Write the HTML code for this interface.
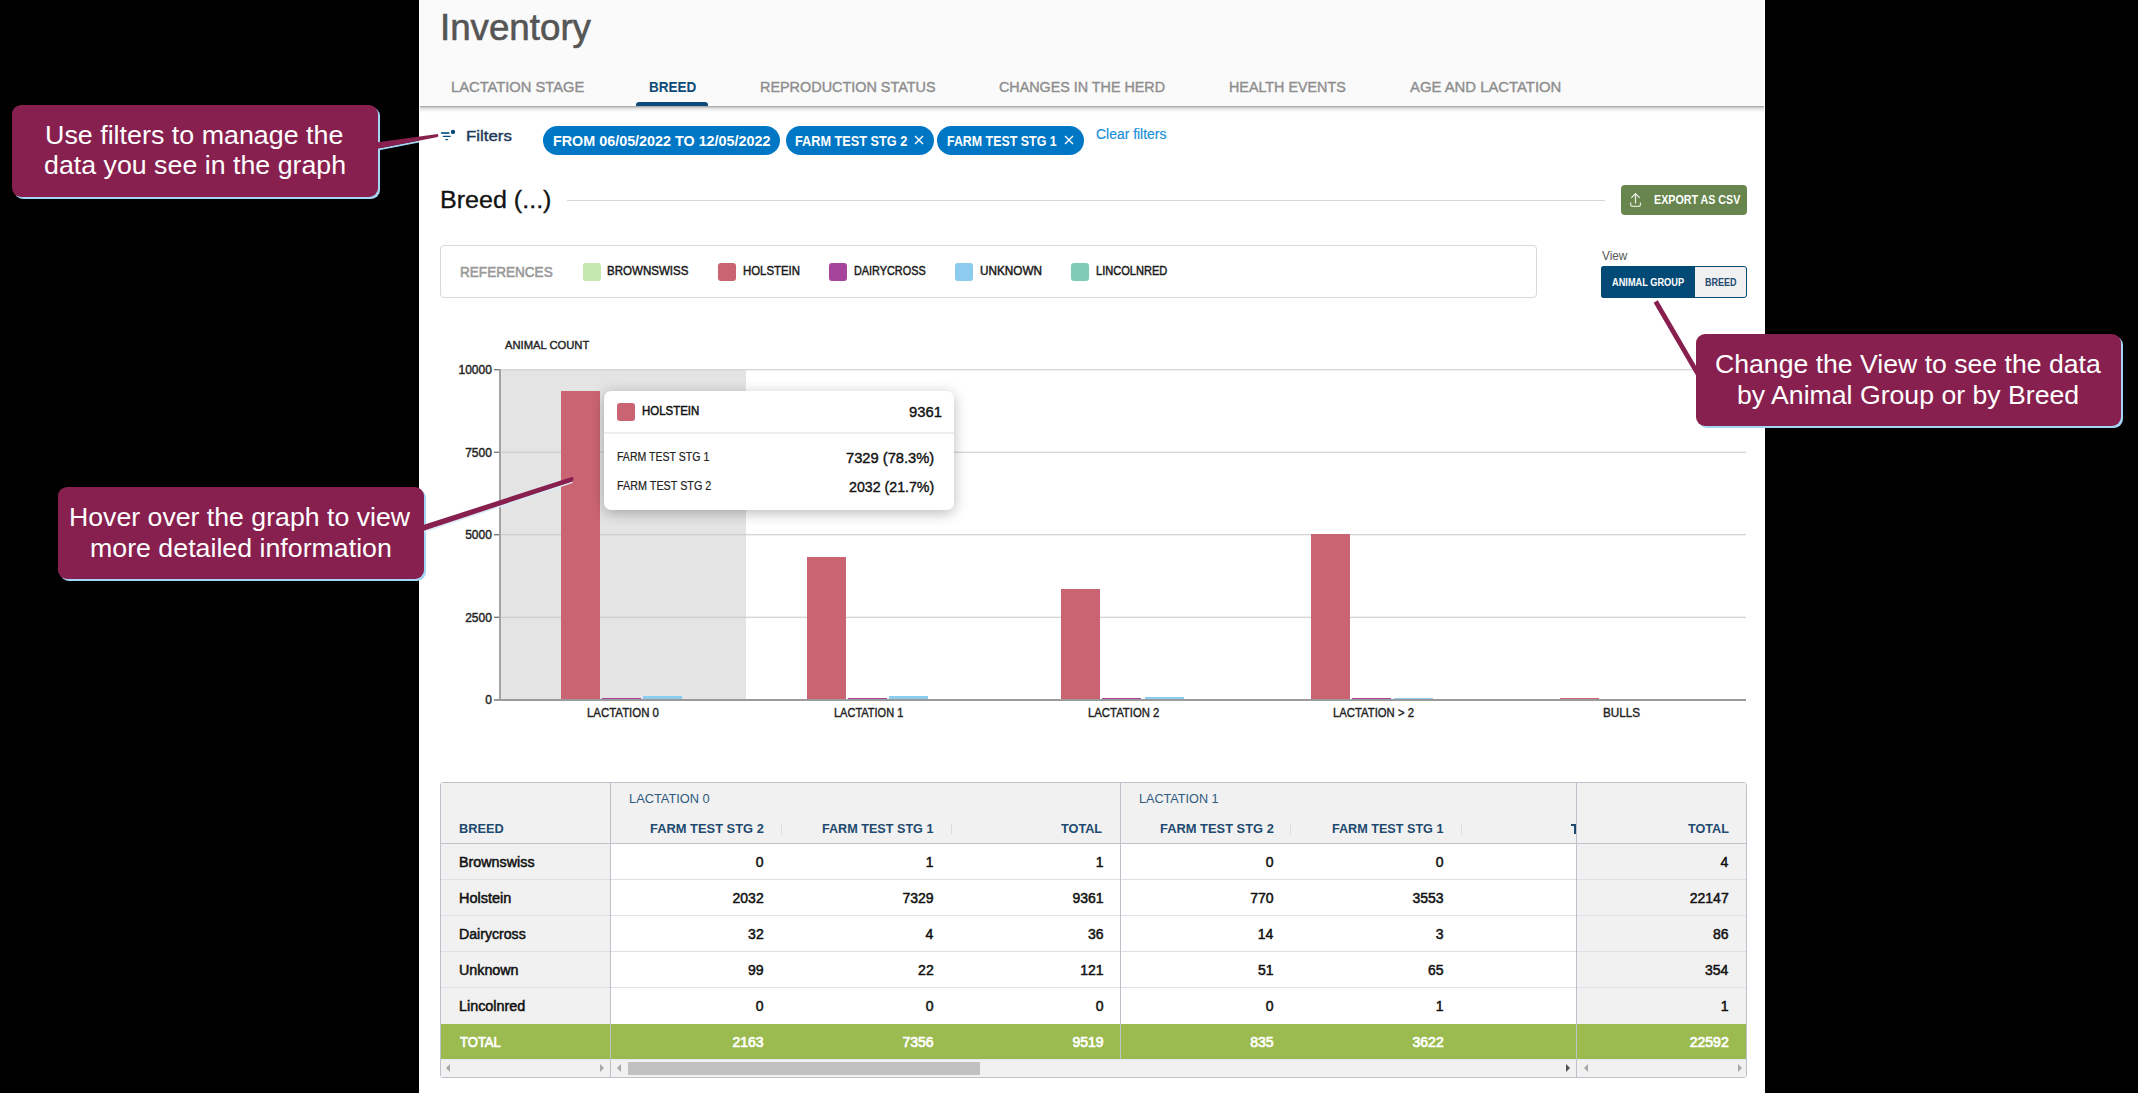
<!DOCTYPE html>
<html><head><meta charset="utf-8"><style>
html,body{margin:0;padding:0;background:#000;width:2138px;height:1093px;overflow:hidden;}
#root{position:relative;width:2138px;height:1093px;overflow:hidden;background:#000;font-family:"Liberation Sans",sans-serif;}
</style></head><body><div id="root">
<div style="position:absolute;left:419px;top:0px;width:1346px;height:1093px;z-index:0;background:#fff;"></div>
<div style="position:absolute;left:420px;top:0px;width:1344px;height:105px;z-index:1;background:#fafafa;"></div>
<div style="position:absolute;left:420px;top:106px;width:1344px;height:1px;z-index:1;background:#ababab;"></div>
<div style="position:absolute;left:420px;top:107px;width:1344px;height:1px;z-index:1;background:#cdcdcd;"></div>
<div style="position:absolute;left:420px;top:108px;width:1344px;height:1px;z-index:1;background:#e0e0e0;"></div>
<div style="position:absolute;left:420px;top:109px;width:1344px;height:1px;z-index:1;background:#ececec;"></div>
<div style="position:absolute;left:420px;top:110px;width:1344px;height:1px;z-index:1;background:#f4f4f4;"></div>
<div style="position:absolute;left:420px;top:111px;width:1344px;height:1px;z-index:1;background:#f9f9f9;"></div>
<div style="position:absolute;left:420px;top:112px;width:1344px;height:1px;z-index:1;background:#fcfcfc;"></div>
<div style="position:absolute;left:636px;top:102px;width:72px;height:4px;z-index:2;background:#0d4a78;border-radius:3px 3px 0 0;"></div>
<svg style="position:absolute;left:436px;top:122px;z-index:3" width="30" height="24" viewBox="0 0 30 24"><rect x="4.8" y="10.1" width="8.8" height="1.8" rx="0.8" fill="#2e6a94"/><rect x="6.8" y="13.8" width="7.9" height="1.3" rx="0.6" fill="#004a7c"/><rect x="9.2" y="16.9" width="2.8" height="1.3" rx="0.6" fill="#004a7c"/><circle cx="17" cy="9.9" r="2.2" fill="#004a7c"/></svg>
<div style="position:absolute;left:543px;top:126px;width:237px;height:29px;z-index:2;background:#0077c5;border-radius:15px;"></div>
<div style="position:absolute;left:786px;top:126px;width:148px;height:29px;z-index:2;background:#0077c5;border-radius:15px;"></div>
<div style="position:absolute;left:937px;top:126px;width:147px;height:29px;z-index:2;background:#0077c5;border-radius:15px;"></div>
<svg style="position:absolute;left:913px;top:133.9px;z-index:3" width="12" height="12" viewBox="0 0 12 12"><path d="M2 2 L10 10 M10 2 L2 10" stroke="#fff" stroke-width="1.4"/></svg>
<svg style="position:absolute;left:1063.4px;top:133.9px;z-index:3" width="12" height="12" viewBox="0 0 12 12"><path d="M2 2 L10 10 M10 2 L2 10" stroke="#fff" stroke-width="1.4"/></svg>
<div style="position:absolute;left:567px;top:200px;width:1038px;height:1px;z-index:2;background:#d6d6d6;"></div>
<div style="position:absolute;left:1621px;top:185px;width:126px;height:30px;z-index:2;background:#68854d;border-radius:4px;"></div>
<svg style="position:absolute;left:1620px;top:184px;z-index:3" width="40" height="32" viewBox="0 0 40 32"><path d="M15.5 9.8 V19.6 M11.3 13.8 L15.5 9.5 L19.7 13.8" stroke="#eef2ea" stroke-width="1.2" fill="none"/><path d="M10.6 18.6 V20.6 Q10.6 22.3 12.3 22.3 H18.8 Q20.5 22.3 20.5 20.6 V18.6" stroke="#dfe6d8" stroke-width="1.3" fill="none"/></svg>
<div style="position:absolute;left:440px;top:245px;width:1095px;height:51px;z-index:2;border:1px solid #d9d9d9;border-radius:4px;background:#fff;"></div>
<div style="position:absolute;left:583px;top:263px;width:18px;height:18px;z-index:3;background:#c5e8b0;border-radius:3px;"></div>
<div style="position:absolute;left:718px;top:263px;width:18px;height:18px;z-index:3;background:#cb6472;border-radius:3px;"></div>
<div style="position:absolute;left:829px;top:263px;width:18px;height:18px;z-index:3;background:#a5449a;border-radius:3px;"></div>
<div style="position:absolute;left:955px;top:263px;width:18px;height:18px;z-index:3;background:#8ccdef;border-radius:3px;"></div>
<div style="position:absolute;left:1071px;top:263px;width:18px;height:18px;z-index:3;background:#80cbb8;border-radius:3px;"></div>
<div style="position:absolute;left:1601px;top:266px;width:146px;height:32px;z-index:2;background:#f0f0f0;border:1px solid #024a76;border-radius:3px;box-sizing:border-box;"></div>
<div style="position:absolute;left:1601px;top:266px;width:94px;height:32px;z-index:3;background:#024a76;border-radius:3px 0 0 3px;"></div>
<div style="position:absolute;left:501px;top:370px;width:245px;height:330px;z-index:1;background:#e4e4e4;"></div>
<svg style="position:absolute;left:0;top:0;z-index:2" width="2138" height="1093"><line x1="501" y1="369.75" x2="1746" y2="369.75" stroke="#c8c8c8" stroke-width="1.2"/><line x1="494" y1="369.75" x2="500" y2="369.75" stroke="#666" stroke-width="1.2"/><line x1="501" y1="452.25" x2="1746" y2="452.25" stroke="#c8c8c8" stroke-width="1.2"/><line x1="494" y1="452.25" x2="500" y2="452.25" stroke="#666" stroke-width="1.2"/><line x1="501" y1="534.75" x2="1746" y2="534.75" stroke="#c8c8c8" stroke-width="1.2"/><line x1="494" y1="534.75" x2="500" y2="534.75" stroke="#666" stroke-width="1.2"/><line x1="501" y1="617.25" x2="1746" y2="617.25" stroke="#c8c8c8" stroke-width="1.2"/><line x1="494" y1="617.25" x2="500" y2="617.25" stroke="#666" stroke-width="1.2"/></svg>
<div style="position:absolute;left:499px;top:369px;width:2px;height:331px;z-index:3;background:#a3a3a3;"></div>
<div style="position:absolute;left:494px;top:699px;width:1252px;height:2px;z-index:3;background:#9a9a9a;"></div>
<div style="position:absolute;left:561px;top:391px;width:39px;height:308px;z-index:2;background:#cb6472;"></div>
<div style="position:absolute;left:807px;top:557px;width:39px;height:142px;z-index:2;background:#cb6472;"></div>
<div style="position:absolute;left:1061px;top:589px;width:39px;height:110px;z-index:2;background:#cb6472;"></div>
<div style="position:absolute;left:1311px;top:534px;width:39px;height:165px;z-index:2;background:#cb6472;"></div>
<div style="position:absolute;left:1560px;top:698px;width:39px;height:1px;z-index:2;background:#cb6472;"></div>
<div style="position:absolute;left:602px;top:698px;width:39px;height:1px;z-index:2;background:#a5449a;"></div>
<div style="position:absolute;left:848px;top:698px;width:39px;height:1px;z-index:2;background:#a5449a;"></div>
<div style="position:absolute;left:1102px;top:698px;width:39px;height:1px;z-index:2;background:#a5449a;"></div>
<div style="position:absolute;left:1352px;top:698px;width:39px;height:1px;z-index:2;background:#a5449a;"></div>
<div style="position:absolute;left:643px;top:696px;width:39px;height:3px;z-index:2;background:#8ccdef;"></div>
<div style="position:absolute;left:889px;top:696px;width:39px;height:3px;z-index:2;background:#8ccdef;"></div>
<div style="position:absolute;left:1145px;top:697px;width:39px;height:2px;z-index:2;background:#8ccdef;"></div>
<div style="position:absolute;left:1394px;top:698px;width:39px;height:1px;z-index:2;background:#8ccdef;"></div>
<div style="position:absolute;left:604px;top:391px;width:350px;height:119px;z-index:6;background:#fff;border-radius:7px;box-shadow:0 3px 14px rgba(0,0,0,0.28);"></div>
<div style="position:absolute;left:617px;top:403px;width:18px;height:18px;z-index:7;background:#cb6472;border-radius:3px;"></div>
<div style="position:absolute;left:604px;top:432px;width:350px;height:2px;z-index:7;background:#eeeeee;"></div>
<div style="position:absolute;left:440px;top:782px;width:1307px;height:296px;z-index:1;border:1px solid #bcc1ca;border-radius:3px;background:#fff;box-sizing:border-box;"></div>
<div style="position:absolute;left:441px;top:783px;width:1305px;height:61px;z-index:2;background:#f1f1f1;"></div>
<div style="position:absolute;left:441px;top:844px;width:170px;height:215px;z-index:2;background:#f1f1f1;"></div>
<div style="position:absolute;left:1577px;top:844px;width:169px;height:215px;z-index:2;background:#f1f1f1;"></div>
<div style="position:absolute;left:441px;top:1059px;width:1305px;height:18px;z-index:2;background:#f1f1f1;"></div>
<div style="position:absolute;left:441px;top:1059px;width:1305px;height:1px;z-index:3;background:#e4e6f2;"></div>
<div style="position:absolute;left:441px;top:1024px;width:1305px;height:35px;z-index:3;background:#9bba50;"></div>
<div style="position:absolute;left:441px;top:843px;width:1305px;height:1px;z-index:4;background:#bcc1ca;"></div>
<div style="position:absolute;left:441px;top:879px;width:1305px;height:1px;z-index:4;background:#dde1e7;"></div>
<div style="position:absolute;left:441px;top:915px;width:1305px;height:1px;z-index:4;background:#dde1e7;"></div>
<div style="position:absolute;left:441px;top:951px;width:1305px;height:1px;z-index:4;background:#dde1e7;"></div>
<div style="position:absolute;left:441px;top:987px;width:1305px;height:1px;z-index:4;background:#dde1e7;"></div>
<div style="position:absolute;left:610px;top:783px;width:1px;height:294px;z-index:5;background:#bcc1ca;"></div>
<div style="position:absolute;left:1576px;top:783px;width:1px;height:294px;z-index:5;background:#bcc1ca;"></div>
<div style="position:absolute;left:1120px;top:783px;width:1px;height:276px;z-index:5;background:#bcc1ca;"></div>
<div style="position:absolute;left:780.5px;top:824px;width:1px;height:10px;z-index:4;background:#dcdcdc;"></div>
<div style="position:absolute;left:950.6px;top:824px;width:1px;height:10px;z-index:4;background:#dcdcdc;"></div>
<div style="position:absolute;left:1290px;top:824px;width:1px;height:10px;z-index:4;background:#dcdcdc;"></div>
<div style="position:absolute;left:1460.6px;top:824px;width:1px;height:10px;z-index:4;background:#dcdcdc;"></div>
<div style="position:absolute;left:1571px;top:824px;width:5px;height:2px;z-index:4;background:#1e4a70;"></div>
<div style="position:absolute;left:1573.7px;top:824px;width:2.3px;height:10px;z-index:4;background:#1e4a70;"></div>
<div style="position:absolute;left:628px;top:1062px;width:352px;height:13px;z-index:6;background:#c1c1c1;"></div>
<div style="position:absolute;left:439.73px;top:9.53px;font-family:'Liberation Sans',sans-serif;font-size:36px;line-height:36px;font-weight:400;color:#555555;white-space:nowrap;z-index:5;transform:scaleX(1.0195);transform-origin:0 0;-webkit-text-stroke:0.6px #555555;">Inventory</div>
<div style="position:absolute;left:451.22px;top:78.60px;font-family:'Liberation Sans',sans-serif;font-size:15px;line-height:15px;font-weight:400;color:#8e8e8e;white-space:nowrap;z-index:5;transform:scaleX(0.9818);transform-origin:0 0;-webkit-text-stroke:0.4px #8e8e8e;">LACTATION STAGE</div>
<div style="position:absolute;left:648.70px;top:78.80px;font-family:'Liberation Sans',sans-serif;font-size:15px;line-height:15px;font-weight:700;color:#0d4a78;white-space:nowrap;z-index:5;transform:scaleX(0.9024);transform-origin:0 0;">BREED</div>
<div style="position:absolute;left:760.05px;top:78.60px;font-family:'Liberation Sans',sans-serif;font-size:15px;line-height:15px;font-weight:400;color:#8e8e8e;white-space:nowrap;z-index:5;transform:scaleX(0.9603);transform-origin:0 0;-webkit-text-stroke:0.4px #8e8e8e;">REPRODUCTION STATUS</div>
<div style="position:absolute;left:999.33px;top:78.60px;font-family:'Liberation Sans',sans-serif;font-size:15px;line-height:15px;font-weight:400;color:#8e8e8e;white-space:nowrap;z-index:5;transform:scaleX(0.9546);transform-origin:0 0;-webkit-text-stroke:0.4px #8e8e8e;">CHANGES IN THE HERD</div>
<div style="position:absolute;left:1229.25px;top:78.60px;font-family:'Liberation Sans',sans-serif;font-size:15px;line-height:15px;font-weight:400;color:#8e8e8e;white-space:nowrap;z-index:5;transform:scaleX(0.9548);transform-origin:0 0;-webkit-text-stroke:0.4px #8e8e8e;">HEALTH EVENTS</div>
<div style="position:absolute;left:1410.30px;top:78.60px;font-family:'Liberation Sans',sans-serif;font-size:15px;line-height:15px;font-weight:400;color:#8e8e8e;white-space:nowrap;z-index:5;transform:scaleX(0.9902);transform-origin:0 0;-webkit-text-stroke:0.4px #8e8e8e;">AGE AND LACTATION</div>
<div style="position:absolute;left:465.69px;top:127.88px;font-family:'Liberation Sans',sans-serif;font-size:15.5px;line-height:15.5px;font-weight:400;color:#1f3a5a;white-space:nowrap;z-index:5;transform:scaleX(1.0879);transform-origin:0 0;-webkit-text-stroke:0.4px #1f3a5a;">Filters</div>
<div style="position:absolute;left:553.08px;top:134.15px;font-family:'Liberation Sans',sans-serif;font-size:14px;line-height:14px;font-weight:700;color:#fff;white-space:nowrap;z-index:5;transform:scaleX(1.0246);transform-origin:0 0;">FROM 06/05/2022 TO 12/05/2022</div>
<div style="position:absolute;left:795.18px;top:134.15px;font-family:'Liberation Sans',sans-serif;font-size:14px;line-height:14px;font-weight:700;color:#fff;white-space:nowrap;z-index:5;transform:scaleX(0.9077);transform-origin:0 0;">FARM TEST STG 2</div>
<div style="position:absolute;left:947.20px;top:134.15px;font-family:'Liberation Sans',sans-serif;font-size:14px;line-height:14px;font-weight:700;color:#fff;white-space:nowrap;z-index:5;transform:scaleX(0.8865);transform-origin:0 0;">FARM TEST STG 1</div>
<div style="position:absolute;left:1095.50px;top:127.15px;font-family:'Liberation Sans',sans-serif;font-size:14px;line-height:14px;font-weight:400;color:#1a90d8;white-space:nowrap;z-index:5;transform:scaleX(0.9944);transform-origin:0 0;-webkit-text-stroke:0.2px #1a90d8;">Clear filters</div>
<div style="position:absolute;left:439.74px;top:189.23px;font-family:'Liberation Sans',sans-serif;font-size:23px;line-height:23px;font-weight:400;color:#111;white-space:nowrap;z-index:5;transform:scaleX(1.0899);transform-origin:0 0;-webkit-text-stroke:0.3px #111;">Breed (...)</div>
<div style="position:absolute;left:1653.52px;top:194.02px;font-family:'Liberation Sans',sans-serif;font-size:12.5px;line-height:12.5px;font-weight:700;color:#fff;white-space:nowrap;z-index:5;transform:scaleX(0.8551);transform-origin:0 0;">EXPORT AS CSV</div>
<div style="position:absolute;left:460.45px;top:264.38px;font-family:'Liberation Sans',sans-serif;font-size:15.5px;line-height:15.5px;font-weight:400;color:#9a9a9a;white-space:nowrap;z-index:5;transform:scaleX(0.8752);transform-origin:0 0;-webkit-text-stroke:0.6px #9a9a9a;">REFERENCES</div>
<div style="position:absolute;left:607.06px;top:263.87px;font-family:'Liberation Sans',sans-serif;font-size:13.5px;line-height:13.5px;font-weight:400;color:#1a1a1a;white-space:nowrap;z-index:5;transform:scaleX(0.8552);transform-origin:0 0;-webkit-text-stroke:0.5px #1a1a1a;">BROWNSWISS</div>
<div style="position:absolute;left:742.87px;top:263.87px;font-family:'Liberation Sans',sans-serif;font-size:13.5px;line-height:13.5px;font-weight:400;color:#1a1a1a;white-space:nowrap;z-index:5;transform:scaleX(0.8445);transform-origin:0 0;-webkit-text-stroke:0.5px #1a1a1a;">HOLSTEIN</div>
<div style="position:absolute;left:853.81px;top:263.87px;font-family:'Liberation Sans',sans-serif;font-size:13.5px;line-height:13.5px;font-weight:400;color:#1a1a1a;white-space:nowrap;z-index:5;transform:scaleX(0.8051);transform-origin:0 0;-webkit-text-stroke:0.5px #1a1a1a;">DAIRYCROSS</div>
<div style="position:absolute;left:980.13px;top:263.87px;font-family:'Liberation Sans',sans-serif;font-size:13.5px;line-height:13.5px;font-weight:400;color:#1a1a1a;white-space:nowrap;z-index:5;transform:scaleX(0.8715);transform-origin:0 0;-webkit-text-stroke:0.5px #1a1a1a;">UNKNOWN</div>
<div style="position:absolute;left:1096.30px;top:263.87px;font-family:'Liberation Sans',sans-serif;font-size:13.5px;line-height:13.5px;font-weight:400;color:#1a1a1a;white-space:nowrap;z-index:5;transform:scaleX(0.8200);transform-origin:0 0;-webkit-text-stroke:0.5px #1a1a1a;">LINCOLNRED</div>
<div style="position:absolute;left:1601.70px;top:249.84px;font-family:'Liberation Sans',sans-serif;font-size:12px;line-height:12px;font-weight:400;color:#555;white-space:nowrap;z-index:5;transform:scaleX(0.9796);transform-origin:0 0;">View</div>
<div style="position:absolute;left:1612.44px;top:276.87px;font-family:'Liberation Sans',sans-serif;font-size:11.5px;line-height:11.5px;font-weight:700;color:#fff;white-space:nowrap;z-index:5;transform:scaleX(0.8022);transform-origin:0 0;">ANIMAL GROUP</div>
<div style="position:absolute;left:1704.75px;top:276.87px;font-family:'Liberation Sans',sans-serif;font-size:11.5px;line-height:11.5px;font-weight:700;color:#1e4a70;white-space:nowrap;z-index:5;transform:scaleX(0.7841);transform-origin:0 0;">BREED</div>
<div style="position:absolute;left:505.30px;top:339.61px;font-family:'Liberation Sans',sans-serif;font-size:11.8px;line-height:11.8px;font-weight:400;color:#222;white-space:nowrap;z-index:5;transform:scaleX(0.9499);transform-origin:0 0;-webkit-text-stroke:0.4px #222;">ANIMAL COUNT</div>
<div style="position:absolute;left:458.50px;top:364.19px;font-family:'Liberation Sans',sans-serif;font-size:12px;line-height:12px;font-weight:400;color:#222;white-space:nowrap;z-index:5;-webkit-text-stroke:0.4px #222;">10000</div>
<div style="position:absolute;left:465.18px;top:446.69px;font-family:'Liberation Sans',sans-serif;font-size:12px;line-height:12px;font-weight:400;color:#222;white-space:nowrap;z-index:5;-webkit-text-stroke:0.4px #222;">7500</div>
<div style="position:absolute;left:465.18px;top:529.19px;font-family:'Liberation Sans',sans-serif;font-size:12px;line-height:12px;font-weight:400;color:#222;white-space:nowrap;z-index:5;-webkit-text-stroke:0.4px #222;">5000</div>
<div style="position:absolute;left:465.18px;top:611.69px;font-family:'Liberation Sans',sans-serif;font-size:12px;line-height:12px;font-weight:400;color:#222;white-space:nowrap;z-index:5;-webkit-text-stroke:0.4px #222;">2500</div>
<div style="position:absolute;left:485.20px;top:694.19px;font-family:'Liberation Sans',sans-serif;font-size:12px;line-height:12px;font-weight:400;color:#222;white-space:nowrap;z-index:5;-webkit-text-stroke:0.4px #222;">0</div>
<div style="position:absolute;left:587.12px;top:706.20px;font-family:'Liberation Sans',sans-serif;font-size:13px;line-height:13px;font-weight:400;color:#222;white-space:nowrap;z-index:5;transform:scaleX(0.8790);transform-origin:0 0;-webkit-text-stroke:0.4px #222;">LACTATION 0</div>
<div style="position:absolute;left:834.45px;top:706.20px;font-family:'Liberation Sans',sans-serif;font-size:13px;line-height:13px;font-weight:400;color:#222;white-space:nowrap;z-index:5;transform:scaleX(0.8463);transform-origin:0 0;-webkit-text-stroke:0.4px #222;">LACTATION 1</div>
<div style="position:absolute;left:1088.03px;top:706.20px;font-family:'Liberation Sans',sans-serif;font-size:13px;line-height:13px;font-weight:400;color:#222;white-space:nowrap;z-index:5;transform:scaleX(0.8724);transform-origin:0 0;-webkit-text-stroke:0.4px #222;">LACTATION 2</div>
<div style="position:absolute;left:1332.63px;top:706.20px;font-family:'Liberation Sans',sans-serif;font-size:13px;line-height:13px;font-weight:400;color:#222;white-space:nowrap;z-index:5;transform:scaleX(0.8694);transform-origin:0 0;-webkit-text-stroke:0.4px #222;">LACTATION &gt; 2</div>
<div style="position:absolute;left:1603.40px;top:706.20px;font-family:'Liberation Sans',sans-serif;font-size:13px;line-height:13px;font-weight:400;color:#222;white-space:nowrap;z-index:5;transform:scaleX(0.9011);transform-origin:0 0;-webkit-text-stroke:0.4px #222;">BULLS</div>
<div style="position:absolute;left:641.62px;top:404.00px;font-family:'Liberation Sans',sans-serif;font-size:13px;line-height:13px;font-weight:400;color:#111;white-space:nowrap;z-index:8;transform:scaleX(0.8806);transform-origin:0 0;-webkit-text-stroke:0.5px #111;">HOLSTEIN</div>
<div style="position:absolute;left:908.73px;top:403.68px;font-family:'Liberation Sans',sans-serif;font-size:15.5px;line-height:15.5px;font-weight:400;color:#111;white-space:nowrap;z-index:8;transform:scaleX(0.9558);transform-origin:0 0;-webkit-text-stroke:0.4px #111;">9361</div>
<div style="position:absolute;left:616.76px;top:450.82px;font-family:'Liberation Sans',sans-serif;font-size:12.5px;line-height:12.5px;font-weight:400;color:#222;white-space:nowrap;z-index:8;transform:scaleX(0.8449);transform-origin:0 0;-webkit-text-stroke:0.2px #222;">FARM TEST STG 1</div>
<div style="position:absolute;left:846.31px;top:450.00px;font-family:'Liberation Sans',sans-serif;font-size:15px;line-height:15px;font-weight:400;color:#111;white-space:nowrap;z-index:8;transform:scaleX(0.9801);transform-origin:0 0;-webkit-text-stroke:0.4px #111;">7329 (78.3%)</div>
<div style="position:absolute;left:616.74px;top:479.82px;font-family:'Liberation Sans',sans-serif;font-size:12.5px;line-height:12.5px;font-weight:400;color:#222;white-space:nowrap;z-index:8;transform:scaleX(0.8634);transform-origin:0 0;-webkit-text-stroke:0.2px #222;">FARM TEST STG 2</div>
<div style="position:absolute;left:849.34px;top:479.00px;font-family:'Liberation Sans',sans-serif;font-size:15px;line-height:15px;font-weight:400;color:#111;white-space:nowrap;z-index:8;transform:scaleX(0.9462);transform-origin:0 0;-webkit-text-stroke:0.4px #111;">2032 (21.7%)</div>
<div style="position:absolute;left:628.71px;top:792.00px;font-family:'Liberation Sans',sans-serif;font-size:13px;line-height:13px;font-weight:400;color:#2f5a80;white-space:nowrap;z-index:5;transform:scaleX(0.9859);transform-origin:0 0;">LACTATION 0</div>
<div style="position:absolute;left:1138.73px;top:792.00px;font-family:'Liberation Sans',sans-serif;font-size:13px;line-height:13px;font-weight:400;color:#2f5a80;white-space:nowrap;z-index:5;transform:scaleX(0.9721);transform-origin:0 0;">LACTATION 1</div>
<div style="position:absolute;left:458.85px;top:822.17px;font-family:'Liberation Sans',sans-serif;font-size:13.5px;line-height:13.5px;font-weight:700;color:#1e4a70;white-space:nowrap;z-index:5;transform:scaleX(0.9453);transform-origin:0 0;">BREED</div>
<div style="position:absolute;left:649.64px;top:822.17px;font-family:'Liberation Sans',sans-serif;font-size:13.5px;line-height:13.5px;font-weight:700;color:#1e4a70;white-space:nowrap;z-index:5;transform:scaleX(0.9546);transform-origin:0 0;">FARM TEST STG 2</div>
<div style="position:absolute;left:822.16px;top:822.17px;font-family:'Liberation Sans',sans-serif;font-size:13.5px;line-height:13.5px;font-weight:700;color:#1e4a70;white-space:nowrap;z-index:5;transform:scaleX(0.9343);transform-origin:0 0;">FARM TEST STG 1</div>
<div style="position:absolute;left:1061.21px;top:822.17px;font-family:'Liberation Sans',sans-serif;font-size:13.5px;line-height:13.5px;font-weight:700;color:#1e4a70;white-space:nowrap;z-index:5;transform:scaleX(0.9400);transform-origin:0 0;">TOTAL</div>
<div style="position:absolute;left:1159.64px;top:822.17px;font-family:'Liberation Sans',sans-serif;font-size:13.5px;line-height:13.5px;font-weight:700;color:#1e4a70;white-space:nowrap;z-index:5;transform:scaleX(0.9546);transform-origin:0 0;">FARM TEST STG 2</div>
<div style="position:absolute;left:1332.16px;top:822.17px;font-family:'Liberation Sans',sans-serif;font-size:13.5px;line-height:13.5px;font-weight:700;color:#1e4a70;white-space:nowrap;z-index:5;transform:scaleX(0.9343);transform-origin:0 0;">FARM TEST STG 1</div>
<div style="position:absolute;left:1687.91px;top:822.17px;font-family:'Liberation Sans',sans-serif;font-size:13.5px;line-height:13.5px;font-weight:700;color:#1e4a70;white-space:nowrap;z-index:5;transform:scaleX(0.9354);transform-origin:0 0;">TOTAL</div>
<div style="position:absolute;left:458.66px;top:855.72px;font-family:'Liberation Sans',sans-serif;font-size:13.8px;line-height:13.8px;font-weight:400;color:#111;white-space:nowrap;z-index:5;transform:scaleX(1.0372);transform-origin:0 0;-webkit-text-stroke:0.5px #111;">Brownswiss</div>
<div style="position:absolute;left:755.70px;top:854.95px;font-family:'Liberation Sans',sans-serif;font-size:14px;line-height:14px;font-weight:400;color:#111;white-space:nowrap;z-index:5;-webkit-text-stroke:0.5px #111;">0</div>
<div style="position:absolute;left:925.80px;top:854.95px;font-family:'Liberation Sans',sans-serif;font-size:14px;line-height:14px;font-weight:400;color:#111;white-space:nowrap;z-index:5;-webkit-text-stroke:0.5px #111;">1</div>
<div style="position:absolute;left:1095.80px;top:854.95px;font-family:'Liberation Sans',sans-serif;font-size:14px;line-height:14px;font-weight:400;color:#111;white-space:nowrap;z-index:5;-webkit-text-stroke:0.5px #111;">1</div>
<div style="position:absolute;left:1265.70px;top:854.95px;font-family:'Liberation Sans',sans-serif;font-size:14px;line-height:14px;font-weight:400;color:#111;white-space:nowrap;z-index:5;-webkit-text-stroke:0.5px #111;">0</div>
<div style="position:absolute;left:1435.70px;top:854.95px;font-family:'Liberation Sans',sans-serif;font-size:14px;line-height:14px;font-weight:400;color:#111;white-space:nowrap;z-index:5;-webkit-text-stroke:0.5px #111;">0</div>
<div style="position:absolute;left:1720.60px;top:854.95px;font-family:'Liberation Sans',sans-serif;font-size:14px;line-height:14px;font-weight:400;color:#111;white-space:nowrap;z-index:5;-webkit-text-stroke:0.5px #111;">4</div>
<div style="position:absolute;left:458.65px;top:891.72px;font-family:'Liberation Sans',sans-serif;font-size:13.8px;line-height:13.8px;font-weight:400;color:#111;white-space:nowrap;z-index:5;transform:scaleX(1.0484);transform-origin:0 0;-webkit-text-stroke:0.5px #111;">Holstein</div>
<div style="position:absolute;left:732.54px;top:890.95px;font-family:'Liberation Sans',sans-serif;font-size:14px;line-height:14px;font-weight:400;color:#111;white-space:nowrap;z-index:5;-webkit-text-stroke:0.5px #111;">2032</div>
<div style="position:absolute;left:902.44px;top:890.95px;font-family:'Liberation Sans',sans-serif;font-size:14px;line-height:14px;font-weight:400;color:#111;white-space:nowrap;z-index:5;-webkit-text-stroke:0.5px #111;">7329</div>
<div style="position:absolute;left:1072.44px;top:890.95px;font-family:'Liberation Sans',sans-serif;font-size:14px;line-height:14px;font-weight:400;color:#111;white-space:nowrap;z-index:5;-webkit-text-stroke:0.5px #111;">9361</div>
<div style="position:absolute;left:1250.13px;top:890.95px;font-family:'Liberation Sans',sans-serif;font-size:14px;line-height:14px;font-weight:400;color:#111;white-space:nowrap;z-index:5;-webkit-text-stroke:0.5px #111;">770</div>
<div style="position:absolute;left:1412.44px;top:890.95px;font-family:'Liberation Sans',sans-serif;font-size:14px;line-height:14px;font-weight:400;color:#111;white-space:nowrap;z-index:5;-webkit-text-stroke:0.5px #111;">3553</div>
<div style="position:absolute;left:1689.76px;top:890.95px;font-family:'Liberation Sans',sans-serif;font-size:14px;line-height:14px;font-weight:400;color:#111;white-space:nowrap;z-index:5;-webkit-text-stroke:0.5px #111;">22147</div>
<div style="position:absolute;left:458.67px;top:927.72px;font-family:'Liberation Sans',sans-serif;font-size:13.8px;line-height:13.8px;font-weight:400;color:#111;white-space:nowrap;z-index:5;transform:scaleX(1.0240);transform-origin:0 0;-webkit-text-stroke:0.5px #111;">Dairycross</div>
<div style="position:absolute;left:748.11px;top:926.95px;font-family:'Liberation Sans',sans-serif;font-size:14px;line-height:14px;font-weight:400;color:#111;white-space:nowrap;z-index:5;-webkit-text-stroke:0.5px #111;">32</div>
<div style="position:absolute;left:925.60px;top:926.95px;font-family:'Liberation Sans',sans-serif;font-size:14px;line-height:14px;font-weight:400;color:#111;white-space:nowrap;z-index:5;-webkit-text-stroke:0.5px #111;">4</div>
<div style="position:absolute;left:1088.01px;top:926.95px;font-family:'Liberation Sans',sans-serif;font-size:14px;line-height:14px;font-weight:400;color:#111;white-space:nowrap;z-index:5;-webkit-text-stroke:0.5px #111;">36</div>
<div style="position:absolute;left:1257.81px;top:926.95px;font-family:'Liberation Sans',sans-serif;font-size:14px;line-height:14px;font-weight:400;color:#111;white-space:nowrap;z-index:5;-webkit-text-stroke:0.5px #111;">14</div>
<div style="position:absolute;left:1435.80px;top:926.95px;font-family:'Liberation Sans',sans-serif;font-size:14px;line-height:14px;font-weight:400;color:#111;white-space:nowrap;z-index:5;-webkit-text-stroke:0.5px #111;">3</div>
<div style="position:absolute;left:1713.01px;top:926.95px;font-family:'Liberation Sans',sans-serif;font-size:14px;line-height:14px;font-weight:400;color:#111;white-space:nowrap;z-index:5;-webkit-text-stroke:0.5px #111;">86</div>
<div style="position:absolute;left:458.77px;top:963.72px;font-family:'Liberation Sans',sans-serif;font-size:13.8px;line-height:13.8px;font-weight:400;color:#111;white-space:nowrap;z-index:5;transform:scaleX(1.0349);transform-origin:0 0;-webkit-text-stroke:0.5px #111;">Unknown</div>
<div style="position:absolute;left:748.01px;top:962.95px;font-family:'Liberation Sans',sans-serif;font-size:14px;line-height:14px;font-weight:400;color:#111;white-space:nowrap;z-index:5;-webkit-text-stroke:0.5px #111;">99</div>
<div style="position:absolute;left:918.11px;top:962.95px;font-family:'Liberation Sans',sans-serif;font-size:14px;line-height:14px;font-weight:400;color:#111;white-space:nowrap;z-index:5;-webkit-text-stroke:0.5px #111;">22</div>
<div style="position:absolute;left:1080.23px;top:962.95px;font-family:'Liberation Sans',sans-serif;font-size:14px;line-height:14px;font-weight:400;color:#111;white-space:nowrap;z-index:5;-webkit-text-stroke:0.5px #111;">121</div>
<div style="position:absolute;left:1258.01px;top:962.95px;font-family:'Liberation Sans',sans-serif;font-size:14px;line-height:14px;font-weight:400;color:#111;white-space:nowrap;z-index:5;-webkit-text-stroke:0.5px #111;">51</div>
<div style="position:absolute;left:1428.01px;top:962.95px;font-family:'Liberation Sans',sans-serif;font-size:14px;line-height:14px;font-weight:400;color:#111;white-space:nowrap;z-index:5;-webkit-text-stroke:0.5px #111;">65</div>
<div style="position:absolute;left:1705.03px;top:962.95px;font-family:'Liberation Sans',sans-serif;font-size:14px;line-height:14px;font-weight:400;color:#111;white-space:nowrap;z-index:5;-webkit-text-stroke:0.5px #111;">354</div>
<div style="position:absolute;left:458.66px;top:999.72px;font-family:'Liberation Sans',sans-serif;font-size:13.8px;line-height:13.8px;font-weight:400;color:#111;white-space:nowrap;z-index:5;transform:scaleX(1.0405);transform-origin:0 0;-webkit-text-stroke:0.5px #111;">Lincolnred</div>
<div style="position:absolute;left:755.70px;top:998.95px;font-family:'Liberation Sans',sans-serif;font-size:14px;line-height:14px;font-weight:400;color:#111;white-space:nowrap;z-index:5;-webkit-text-stroke:0.5px #111;">0</div>
<div style="position:absolute;left:925.70px;top:998.95px;font-family:'Liberation Sans',sans-serif;font-size:14px;line-height:14px;font-weight:400;color:#111;white-space:nowrap;z-index:5;-webkit-text-stroke:0.5px #111;">0</div>
<div style="position:absolute;left:1095.70px;top:998.95px;font-family:'Liberation Sans',sans-serif;font-size:14px;line-height:14px;font-weight:400;color:#111;white-space:nowrap;z-index:5;-webkit-text-stroke:0.5px #111;">0</div>
<div style="position:absolute;left:1265.70px;top:998.95px;font-family:'Liberation Sans',sans-serif;font-size:14px;line-height:14px;font-weight:400;color:#111;white-space:nowrap;z-index:5;-webkit-text-stroke:0.5px #111;">0</div>
<div style="position:absolute;left:1435.80px;top:998.95px;font-family:'Liberation Sans',sans-serif;font-size:14px;line-height:14px;font-weight:400;color:#111;white-space:nowrap;z-index:5;-webkit-text-stroke:0.5px #111;">1</div>
<div style="position:absolute;left:1720.80px;top:998.95px;font-family:'Liberation Sans',sans-serif;font-size:14px;line-height:14px;font-weight:400;color:#111;white-space:nowrap;z-index:5;-webkit-text-stroke:0.5px #111;">1</div>
<div style="position:absolute;left:459.52px;top:1035.92px;font-family:'Liberation Sans',sans-serif;font-size:13.8px;line-height:13.8px;font-weight:400;color:#fff;white-space:nowrap;z-index:5;transform:scaleX(0.9453);transform-origin:0 0;-webkit-text-stroke:0.7px #fff;">TOTAL</div>
<div style="position:absolute;left:732.44px;top:1035.15px;font-family:'Liberation Sans',sans-serif;font-size:14px;line-height:14px;font-weight:400;color:#fff;white-space:nowrap;z-index:5;-webkit-text-stroke:0.7px #fff;">2163</div>
<div style="position:absolute;left:902.44px;top:1035.15px;font-family:'Liberation Sans',sans-serif;font-size:14px;line-height:14px;font-weight:400;color:#fff;white-space:nowrap;z-index:5;-webkit-text-stroke:0.7px #fff;">7356</div>
<div style="position:absolute;left:1072.44px;top:1035.15px;font-family:'Liberation Sans',sans-serif;font-size:14px;line-height:14px;font-weight:400;color:#fff;white-space:nowrap;z-index:5;-webkit-text-stroke:0.7px #fff;">9519</div>
<div style="position:absolute;left:1250.23px;top:1035.15px;font-family:'Liberation Sans',sans-serif;font-size:14px;line-height:14px;font-weight:400;color:#fff;white-space:nowrap;z-index:5;-webkit-text-stroke:0.7px #fff;">835</div>
<div style="position:absolute;left:1412.54px;top:1035.15px;font-family:'Liberation Sans',sans-serif;font-size:14px;line-height:14px;font-weight:400;color:#fff;white-space:nowrap;z-index:5;-webkit-text-stroke:0.7px #fff;">3622</div>
<div style="position:absolute;left:1689.76px;top:1035.15px;font-family:'Liberation Sans',sans-serif;font-size:14px;line-height:14px;font-weight:400;color:#fff;white-space:nowrap;z-index:5;-webkit-text-stroke:0.7px #fff;">22592</div>
<div style="position:absolute;left:44.98px;top:123.08px;font-family:'Liberation Sans',sans-serif;font-size:25.3px;line-height:25.3px;font-weight:400;color:#fff;white-space:nowrap;z-index:21;transform:scaleX(1.0612);transform-origin:0 0;">Use filters to manage the</div>
<div style="position:absolute;left:43.94px;top:153.18px;font-family:'Liberation Sans',sans-serif;font-size:25.3px;line-height:25.3px;font-weight:400;color:#fff;white-space:nowrap;z-index:21;transform:scaleX(1.0581);transform-origin:0 0;">data you see in the graph</div>
<div style="position:absolute;left:69.09px;top:505.08px;font-family:'Liberation Sans',sans-serif;font-size:25.3px;line-height:25.3px;font-weight:400;color:#fff;white-space:nowrap;z-index:21;transform:scaleX(1.0545);transform-origin:0 0;">Hover over the graph to view</div>
<div style="position:absolute;left:89.81px;top:535.58px;font-family:'Liberation Sans',sans-serif;font-size:25.3px;line-height:25.3px;font-weight:400;color:#fff;white-space:nowrap;z-index:21;transform:scaleX(1.0574);transform-origin:0 0;">more detailed information</div>
<div style="position:absolute;left:1715.44px;top:351.58px;font-family:'Liberation Sans',sans-serif;font-size:25.3px;line-height:25.3px;font-weight:400;color:#fff;white-space:nowrap;z-index:21;transform:scaleX(1.0523);transform-origin:0 0;">Change the View to see the data</div>
<div style="position:absolute;left:1737.21px;top:382.88px;font-family:'Liberation Sans',sans-serif;font-size:25.3px;line-height:25.3px;font-weight:400;color:#fff;white-space:nowrap;z-index:21;transform:scaleX(1.0533);transform-origin:0 0;">by Animal Group or by Breed</div>
<svg style="position:absolute;left:0;top:0;z-index:6" width="2138" height="1093"><path d="M450 1064 L446 1068 L450 1072 Z" fill="#a8a8a8"/><path d="M600 1064 L604 1068 L600 1072 Z" fill="#a8a8a8"/><path d="M621 1064 L617 1068 L621 1072 Z" fill="#a8a8a8"/><path d="M1566 1064 L1570 1068 L1566 1072 Z" fill="#505050"/><path d="M1588 1064 L1584 1068 L1588 1072 Z" fill="#a8a8a8"/><path d="M1738 1064 L1742 1068 L1738 1072 Z" fill="#a8a8a8"/></svg>
<div style="position:absolute;left:12px;top:105px;width:366px;height:92px;z-index:20;background:#88204f;border-radius:9px;box-shadow:2px 2px 0 #a3d5f5;"></div>
<div style="position:absolute;left:58px;top:487px;width:366px;height:92px;z-index:20;background:#88204f;border-radius:9px;box-shadow:2px 2px 0 #a3d5f5;"></div>
<div style="position:absolute;left:1696px;top:334px;width:425px;height:92px;z-index:20;background:#88204f;border-radius:9px;box-shadow:2px 2px 0 #a3d5f5;"></div>
<svg style="position:absolute;left:0;top:0;z-index:22" width="2138" height="1093"><polygon points="378,148.4 419,140.5 419,142.4 378,150.4" fill="#a3d5f5"/><polygon points="376,142.5 437.8,134.1 438.3,135.5 437.8,137 376,149" fill="#88204f"/><polygon points="424,530.8 572.5,481.4 572.5,483 424,532.6" fill="#d9edf9"/><polygon points="420,526 572.5,476.8 573.6,479.1 572.5,481.6 420,531.9" fill="#88204f"/><line x1="1655.7" y1="301.5" x2="1707.3" y2="390" stroke="#88204f" stroke-width="4.8"/></svg>
</div></body></html>
